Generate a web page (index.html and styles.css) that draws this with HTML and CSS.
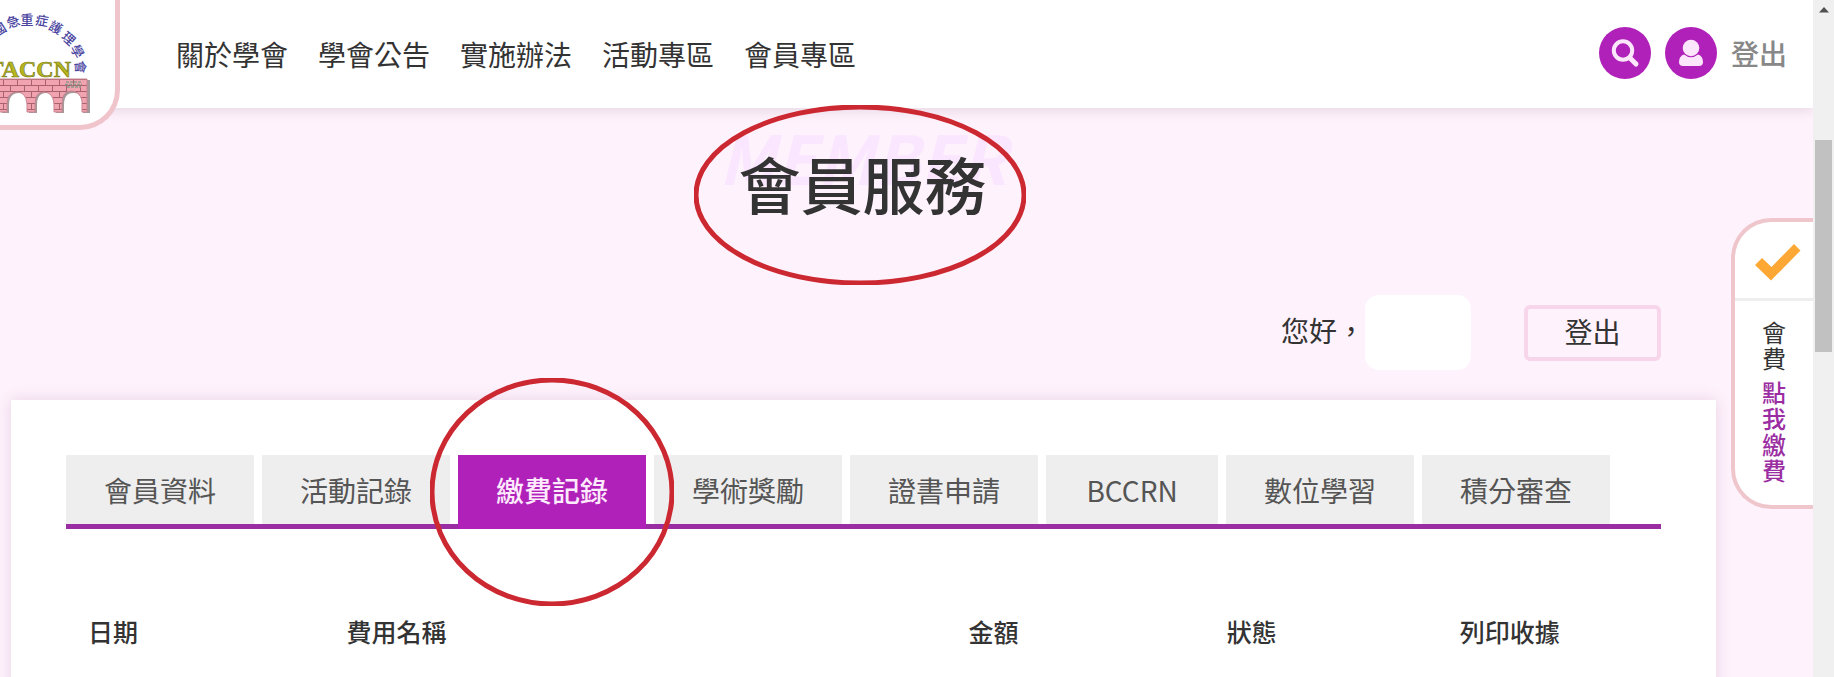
FILE: index.html
```html
<!DOCTYPE html>
<html lang="zh-Hant">
<head>
<meta charset="utf-8">
<title>會員服務</title>
<link rel="stylesheet" href="styles.css">
</head>
<body>
<div class="page">
  <header class="header">
    <a class="logo" href="#" aria-label="TACCN">
      <svg width="120" height="126" viewBox="0 0 120 126">
        <defs>
          <pattern id="brick" width="14" height="12" patternUnits="userSpaceOnUse" y="79">
            <rect width="14" height="12" fill="#f2a3b0"/>
            <path d="M0 .5H14M0 6.500H14M3.500 0V6M10.500 6V12" stroke="#a8626f" fill="none"/>
          </pattern>
        </defs>
        <g class="logo-arc">
          <text transform="translate(-1 29) rotate(-32)">國</text>
          <text transform="translate(13 21) rotate(-18)">急</text>
          <text transform="translate(27 18)">重</text>
          <text transform="translate(42 20) rotate(10)">症</text>
          <text transform="translate(56 27) rotate(28)">護</text>
          <text transform="translate(69 38) rotate(42)">理</text>
          <text transform="translate(78 51) rotate(62)">學</text>
          <text transform="translate(81 67) rotate(85)">會</text>
        </g>
        <path transform="translate(2 1)" fill="#a5989b" d="M0 79H88V112H81V101Q79 91 71 92Q62 92 62 104V112H54V104Q53 92 44 92Q35 92 35 104V112H27V104Q26 92 17 92Q7 92 7 104V112H0Z"/>
        <path fill="url(#brick)" stroke="#c98590" d="M-2 79H87V112H82V101Q80 91 71 91Q62 91 62 104V112H54V104Q53 92 44 92Q35 92 35 104V112H27V104Q26 92 17 92Q7 92 7 104V112H-2Z"/>
        <path d="M66 82h15M65 84.500h17M67 87h14" stroke="#8f9a8c" stroke-width="1.500" stroke-dasharray="3 1"/>
        <text class="logo-name" x="71" y="77">TACCN</text>
      </svg>
    </a>
    <nav class="nav">
      <a href="#">關於學會</a>
      <a href="#">學會公告</a>
      <a href="#">實施辦法</a>
      <a href="#">活動專區</a>
      <a href="#">會員專區</a>
    </nav>
    <div class="tools">
      <button class="round" type="button" aria-label="搜尋">
        <svg width="52" height="52" viewBox="0 0 52 52" fill="none" stroke="#fbe6fb" stroke-linecap="round"><circle cx="24" cy="23.500" r="9.200" stroke-width="4"/><path d="M31 31l6 6" stroke-width="5"/></svg>
      </button>
      <button class="round" type="button" aria-label="會員">
        <svg width="52" height="52" viewBox="0 0 52 52" fill="#fbe6fb"><circle cx="26" cy="21" r="8.300"/><path d="M19 27.500Q26 33 33 27.500Q38 29 38 35Q38 39 34 39H18Q14 39 14 35Q14 29 19 27.500Z"/></svg>
      </button>
      <a class="exit" href="#">登出</a>
    </div>
  </header>

  <main class="main">
    <div class="hero">
      <span class="ghost" aria-hidden="true">MEMBER</span>
      <h1 class="title">會員服務</h1>
    </div>
    <div class="greeting">
      <span class="hello">您好，</span>
      <span class="name"></span>
      <button class="logout" type="button">登出</button>
    </div>
    <section class="card">
      <nav class="tabs">
        <a class="tab" href="#">會員資料</a>
        <a class="tab" href="#">活動記錄</a>
        <a class="tab active" href="#" aria-current="page">繳費記錄</a>
        <a class="tab" href="#">學術獎勵</a>
        <a class="tab" href="#">證書申請</a>
        <a class="tab" href="#">BCCRN</a>
        <a class="tab" href="#">數位學習</a>
        <a class="tab" href="#">積分審查</a>
      </nav>
      <table class="records">
        <colgroup><col class="c-date"><col class="c-fee"><col class="c-sum"><col class="c-state"><col></colgroup>
        <thead>
          <tr><th>日期</th><th>費用名稱</th><th>金額</th><th>狀態</th><th>列印收據</th></tr>
        </thead>
      </table>
    </section>
  </main>

  <aside class="side">
    <div class="side-icon">
      <svg width="46" height="38" viewBox="0 0 46 38"><path fill="#fda835" d="M0 22L7 15L16.500 24L39 1L45.500 7.500L16 37.500Z"/></svg>
    </div>
    <p class="side-text">會費<a href="#">點我繳費</a></p>
  </aside>

  <svg class="mark mark-title" viewBox="0 0 332 180" aria-hidden="true"><ellipse cx="166" cy="90" rx="164" ry="88"/></svg>
  <svg class="mark mark-tab" viewBox="0 0 244 228" aria-hidden="true"><ellipse cx="122" cy="114" rx="120" ry="112"/></svg>
</div>
<div class="scrollbar" aria-hidden="true">
  <svg class="arrow" width="10" height="6" viewBox="0 0 10 6"><path d="M0 5.500L5 0L10 5.500Z" fill="#505050"/></svg>
  <div class="thumb"></div>
</div>
</body>
</html>
```

FILE: styles.css
```css
* { box-sizing: border-box; }

body {
  margin: 0;
  display: flex;
  height: 100vh;
  overflow: hidden;
  font-family: "Noto Sans CJK TC", "Noto Sans", sans-serif;
  font-size: 28px;
  line-height: 40px;
  color: #333;
  background: #fef2fc;
}

a { color: inherit; text-decoration: none; }
button { font: inherit; color: inherit; padding: 0; cursor: pointer; }

.page {
  position: relative;
  flex: 1;
  min-width: 0;
  display: flex;
  flex-direction: column;
  overflow: hidden;
}

.header {
  position: relative;
  z-index: 1;
  display: flex;
  align-items: center;
  height: 108px;
  padding-right: 26px;
  background: #fff;
  box-shadow: 0 2px 12px rgba(80, 40, 70, .15);
}

.logo {
  align-self: flex-start;
  width: 120px;
  height: 130px;
  overflow: hidden;
  background: #fff;
  border: solid #f0c4cb;
  border-width: 0 5px 5px 0;
  border-radius: 0 0 40px 0;
}
.logo svg { display: block; }
.logo-arc text {
  font-size: 13px;
  font-weight: 500;
  text-anchor: middle;
  dominant-baseline: central;
  fill: #4a44a0;
}
.logo-name {
  font-family: "Liberation Serif", serif;
  font-size: 24px;
  font-weight: 700;
  text-anchor: end;
  fill: #b5b51c;
  stroke: #77781c;
  stroke-width: .6px;
}

.nav { display: flex; gap: 30px; margin-left: 56px; }
.tools { display: flex; align-items: center; gap: 14px; margin-left: auto; padding-bottom: 2px; }
.round {
  width: 52px;
  height: 52px;
  border: 0;
  border-radius: 50%;
  background: #b021b9;
}
.round svg { display: block; }
.exit { font-weight: 500; color: #888; }

.main { flex: 1; display: flex; flex-direction: column; }

.hero { display: grid; justify-items: center; padding: 20px 88px 0 0; }
.hero > * { grid-area: 1 / 1; }
.ghost {
  font-size: 67px;
  font-weight: 700;
  font-style: italic;
  line-height: 56px;
  color: #fae6fe;
}
.title {
  margin: 7px 0 0;
  font-size: 62px;
  font-weight: 500;
  line-height: 96px;
}

.greeting {
  display: flex;
  align-items: center;
  justify-content: flex-end;
  height: 75px;
  margin-top: 64px;
  padding-right: 152px;
}
.hello { padding-bottom: 6px; }
.name {
  width: 106px;
  height: 75px;
  border-radius: 14px;
  background: #fff;
}
.logout {
  width: 137px;
  height: 56px;
  margin-left: 53px;
  padding-bottom: 4px;
  border: 4px solid #f7d5ea;
  border-radius: 6px;
  background: transparent;
}

.card {
  flex: 1;
  margin: 30px 97px 0 11px;
  padding: 55px;
  background: #fff;
  box-shadow: 0 0 14px rgba(140, 60, 120, .18);
}

.tabs {
  display: flex;
  gap: 8px;
  border-bottom: 5px solid #9b2da2;
}
.tab {
  min-width: 172px;
  padding: 15px 38px 14px;
  text-align: center;
  color: #555;
  background: #eee;
}
.tab.active {
  margin-bottom: -5px;
  font-weight: 500;
  color: #fdeafd;
  background: #b021b9;
}

.records {
  width: 100%;
  margin-top: 82px;
  table-layout: fixed;
  border-collapse: collapse;
}
.records th {
  padding: 0 0 0 22px;
  font-size: 25px;
  font-weight: 500;
  text-align: left;
}
.c-date, .c-sum { width: 16.2%; }
.c-fee { width: 39%; }
.c-state { width: 14.6%; }

.side {
  position: absolute;
  top: 218px;
  right: 0;
  z-index: 1;
  width: 82px;
  background: #fff;
  border: 4px solid #eec6cc;
  border-right: 0;
  border-radius: 40px 0 0 40px;
}
.side-icon {
  display: flex;
  justify-content: center;
  padding: 21px 0 17px 8px;
  border-bottom: 3px solid #eee;
}
.side-text {
  width: 24px;
  margin: 0 auto;
  padding: 18px 0 22px;
  font-size: 24px;
  line-height: 26px;
}
.side-text a { display: block; margin-top: 8px; font-weight: 500; color: #9b2da2; }

.mark {
  position: absolute;
  z-index: 2;
  fill: none;
  stroke: #cc2831;
  stroke-width: 5px;
  pointer-events: none;
}
.mark-title { left: 694px; top: 105px; width: 332px; height: 180px; }
.mark-tab { left: 430px; top: 378px; width: 244px; height: 228px; }

.scrollbar { width: 21px; padding: 7px 2px 0; background: #f0f0f0; }
.arrow { display: block; margin: 0 auto; }
.thumb { height: 212px; margin-top: 127px; background: #c1c1c1; }
```
